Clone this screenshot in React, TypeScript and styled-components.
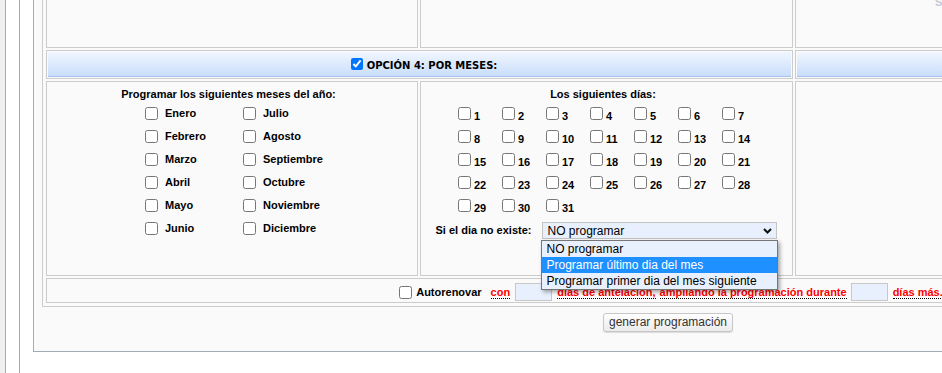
import React from "react";
import styled, { createGlobalStyle } from "styled-components";

const GlobalStyle = createGlobalStyle`
  html, body { margin: 0; padding: 0; overflow: hidden; background: #fff; }
  body { font-family: "Liberation Sans", Arial, sans-serif; font-size: 12px; color: #000; }
  * { box-sizing: border-box; }
`;

const Page = styled.div`
  display: flex;
  width: 1400px;
  height: 373px;
  background: #fff;
`;

const Gutter = styled.div`
  flex: none;
  width: 5px;
  background: #f0f0f0;
`;

const Rail = styled.div`
  flex: none;
  width: 14px;
  border-left: 1px solid #9fadb9;
  background: #fff;
`;

const Main = styled.div`
  flex: none;
  display: flex;
  flex-direction: column;
  align-items: flex-start;
`;

const Panel = styled.div`
  width: 1269px;
  border-left: 1px solid #9fadb9;
  border-bottom: 1px solid #9fadb9;
  background: #fafafa;
  padding: 0 8px 19px;
  display: flex;
  flex-direction: column;
  align-items: center;
`;

const Board = styled.div`
  margin-top: -20px;
  width: 1252px;
  display: grid;
  grid-template-columns: 372px 373px 495px;
  grid-template-rows: 64px 29px 195px 25px;
  gap: 2px;
  padding: 3px;
  border: 1px solid #ccc;
`;

const Cell = styled.div<{ $span?: number }>`
  grid-column: span ${(p) => p.$span ?? 1};
  border: 1px solid #ccc;
  min-width: 0;
`;

const FaintCell = styled(Cell)`
  padding: 11px 0 0 139px;
  font-size: 11px;
  font-weight: bold;
  line-height: 13px;
  color: #c3ccd6;
  overflow: hidden;
`;

const HeaderCell = styled(Cell)`
  padding: 1px;
`;

const HeaderBar = styled.div`
  height: 100%;
  display: flex;
  justify-content: center;
  align-items: center;
  background: linear-gradient(#f0f6fe, #c9defb);
  border-bottom: 1px solid #a8c0ee;
`;

const HeaderCheck = styled.input`
  width: 12px;
  height: 12px;
  margin: 0 4px 0 9px;
`;

const HeaderTitle = styled.span`
  padding-top: 3px;
  font-family: "DejaVu Sans", Verdana, sans-serif;
  font-size: 10px;
  font-weight: bold;
  line-height: 12px;
  white-space: nowrap;
`;

const ContentCell = styled(Cell)`
  padding-top: 6px;
`;

const Caption = styled.div`
  padding-right: 7px;
  text-align: center;
  font-size: 11px;
  font-weight: bold;
  line-height: 13px;
`;

const MonthGrid = styled.div`
  margin-top: 1px;
  display: grid;
  grid-template-columns: 98px 76px;
  grid-template-rows: repeat(6, 23px);
  grid-auto-flow: column;
  justify-content: center;
`;

const DayGrid = styled.div`
  margin-top: 1px;
  display: grid;
  grid-template-columns: repeat(6, 44px) 33px;
  grid-auto-rows: 23px;
  justify-content: center;
`;

const Choice = styled.label`
  display: flex;
  align-items: center;
  white-space: nowrap;
`;

const Box = styled.input`
  flex: none;
  width: 13px;
  height: 13px;
  margin: 0;
`;

const ChoiceText = styled.span<{ $day?: boolean }>`
  margin-left: ${(p) => (p.$day ? 3 : 7)}px;
  padding-top: ${(p) => (p.$day ? 5 : 0)}px;
  font-size: 11px;
  font-weight: bold;
  line-height: 13px;
`;

const MissingRow = styled.div`
  margin-top: 5px;
  display: flex;
  justify-content: center;
  align-items: center;
  gap: 11px;
`;

const FieldLabel = styled.span`
  font-size: 11px;
  font-weight: bold;
  line-height: 13px;
  white-space: nowrap;
`;

const SelectWrap = styled.div`
  position: relative;
  width: 235px;
  height: 17px;
`;

const Select = styled.select`
  appearance: none;
  display: block;
  width: 100%;
  height: 100%;
  margin: 0;
  padding: 0 0 0 4px;
  border: 1px solid #c4c4c4;
  border-radius: 0;
  background: #e8f0fe;
  color: #000;
  font: 12px "Liberation Sans", Arial, sans-serif;
  outline: none;
`;

const Chevron = styled.svg`
  position: absolute;
  right: 5px;
  top: 6px;
  pointer-events: none;
`;

const OptionList = styled.div`
  position: absolute;
  z-index: 5;
  top: 18px;
  left: -1px;
  width: 237px;
  border: 1px solid #767676;
  background: #e8f0fe;
  box-shadow: 2px 2px 4px rgba(0, 0, 0, 0.35);
`;

const OptionRow = styled.div<{ $active?: boolean }>`
  height: 16px;
  line-height: 16px;
  padding-left: 4px;
  font-size: 12px;
  white-space: nowrap;
  background: ${(p) => (p.$active ? "#1e90ff" : "transparent")};
  color: ${(p) => (p.$active ? "#fff" : "#000")};
`;

const RenewCell = styled(Cell)`
  display: flex;
  justify-content: center;
  align-items: center;
  padding: 3px 0 0 6px;
  white-space: nowrap;
`;

const RenewLabel = styled.span`
  margin-left: 4px;
  font-size: 11px;
  font-weight: bold;
  line-height: 13px;
`;

const Note = styled.span<{ $ml: number }>`
  margin-left: ${(p) => p.$ml}px;
  color: #f00;
  font-size: 11px;
  font-weight: bold;
  line-height: 14px;
`;

const Dotted = styled.span`
  border-bottom: 1px dotted #000;
`;

const SmallInput = styled.input<{ $ml: number }>`
  flex: none;
  width: 37px;
  height: 18px;
  margin: 0 0 0 ${(p) => p.$ml}px;
  padding: 0 2px;
  border: 1px solid #c8c8c8;
  background: #e8f0fe;
  font: 12px "Liberation Sans", Arial, sans-serif;
`;

const Button = styled.button`
  margin-top: 6px;
  height: 19px;
  padding: 0 5px;
  border: 1px solid #c6c6c6;
  border-radius: 3px;
  background: linear-gradient(#ffffff, #ebebeb);
  box-shadow: 0 1px 1px rgba(0, 0, 0, 0.12);
  color: #333;
  font: 12px "Liberation Sans", Arial, sans-serif;
  line-height: 15px;
`;

const monthNames = [
  "Enero", "Febrero", "Marzo", "Abril", "Mayo", "Junio",
  "Julio", "Agosto", "Septiembre", "Octubre", "Noviembre", "Diciembre",
];

const days = Array.from({ length: 31 }, (_, i) => i + 1);

const options = [
  "NO programar",
  "Programar último dia del mes",
  "Programar primer dia del mes siguiente",
];

export default function App() {
  return (
    <>
      <GlobalStyle />
      <Page>
        <Gutter />
        <Rail />
        <Rail />
        <Main>
          <Panel>
            <Board>
              <Cell />
              <Cell />
              <FaintCell>S</FaintCell>

              <HeaderCell $span={2}>
                <HeaderBar>
                  <HeaderCheck type="checkbox" defaultChecked />
                  <HeaderTitle>OPCIÓN 4: POR MESES:</HeaderTitle>
                </HeaderBar>
              </HeaderCell>
              <HeaderCell>
                <HeaderBar />
              </HeaderCell>

              <ContentCell>
                <Caption>Programar los siguientes meses del año:</Caption>
                <MonthGrid>
                  {monthNames.map((m) => (
                    <Choice key={m}>
                      <Box type="checkbox" />
                      <ChoiceText>{m}</ChoiceText>
                    </Choice>
                  ))}
                </MonthGrid>
              </ContentCell>

              <ContentCell>
                <Caption>Los siguientes días:</Caption>
                <DayGrid>
                  {days.map((d) => (
                    <Choice key={d}>
                      <Box type="checkbox" />
                      <ChoiceText $day>{d}</ChoiceText>
                    </Choice>
                  ))}
                </DayGrid>
                <MissingRow>
                  <FieldLabel>Si el dia no existe:</FieldLabel>
                  <SelectWrap>
                    <Select defaultValue="0">
                      {options.map((o, i) => (
                        <option key={o} value={String(i)}>{o}</option>
                      ))}
                    </Select>
                    <Chevron width="9" height="6" viewBox="0 0 9 6">
                      <path d="M1 1 L4.5 4.5 L8 1" fill="none" stroke="#111" strokeWidth="2" />
                    </Chevron>
                    <OptionList>
                      {options.map((o, i) => (
                        <OptionRow key={o} $active={i === 1}>{o}</OptionRow>
                      ))}
                    </OptionList>
                  </SelectWrap>
                </MissingRow>
              </ContentCell>

              <Cell />

              <RenewCell $span={3}>
                <Box type="checkbox" />
                <RenewLabel>Autorenovar</RenewLabel>
                <Note $ml={9}><Dotted>con</Dotted></Note>
                <SmallInput type="text" $ml={5} />
                <Note $ml={5}><Dotted>días de antelación,</Dotted></Note>
                <Note $ml={4}><Dotted>ampliando la programación durante</Dotted></Note>
                <SmallInput type="text" $ml={4} />
                <Note $ml={5}><Dotted>días más.</Dotted></Note>
              </RenewCell>
            </Board>
            <Button type="button">generar programación</Button>
          </Panel>
        </Main>
      </Page>
    </>
  );
}
